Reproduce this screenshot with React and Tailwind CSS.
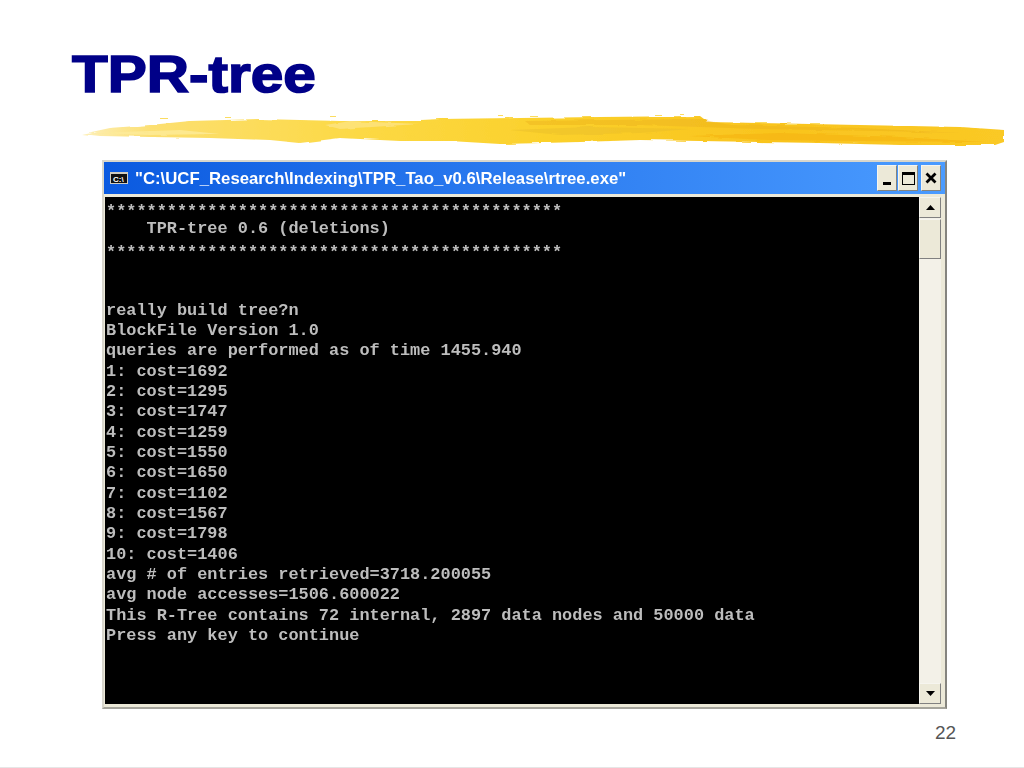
const lines = [
  '*********************************************',
  '    TPR-tree 0.6 (deletions)',
  '*********************************************',
  '',
  '',
  'really build tree?n',
  'BlockFile Version 1.0',
  'queries are performed as of time 1455.940',
  '1: cost=1692',
  '2: cost=1295',
  '3: cost=1747',
  '4: cost=1259',
  '5: cost=1550',
  '6: cost=1650',
  '7: cost=1102',
  '8: cost=1567',
  '9: cost=1798',
  '10: cost=1406',
  'avg # of entries retrieved=3718.200055',
  'avg node accesses=1506.600022',
  'This R-Tree contains 72 internal, 2897 data nodes and 50000 data',
  'Press any key to continue',
];

// page coordinates, so the shapes read straight off the screenshot
const Brush = () => (
  <svg width="944" height="44" viewBox="70 108 944 44" className="block">
    <defs>
      <linearGradient id="stroke" gradientUnits="userSpaceOnUse" x1="80" x2="1004" y1="0" y2="0">
        <stop offset="0" stopColor="#fdf0bb" />
        <stop offset="0.08" stopColor="#fcdf70" />
        <stop offset="0.3" stopColor="#fcd945" />
        <stop offset="0.5" stopColor="#fbd12c" />
        <stop offset="0.75" stopColor="#f9c41e" />
        <stop offset="1" stopColor="#fac925" />
      </linearGradient>
      <filter id="rough" x="-2%" y="-30%" width="104%" height="160%">
        <feTurbulence type="fractalNoise" baseFrequency="0.04 0.22" numOctaves="2" seed="4" />
        <feDisplacementMap in="SourceGraphic" scale="3" xChannelSelector="R" yChannelSelector="G" />
        <feGaussianBlur stdDeviation="0.4" />
      </filter>
    </defs>
    <g filter="url(#rough)">
      <path
        fill="url(#stroke)"
        d="M82 134 L110 128 L150 125 L190 121 L260 119 L340 121 L400 121 L440 119 L520 118 L600 117 L700 116 L708 122 L760 123 L860 125 L960 127 L1004 130 L1004 142 L995 145 L900 145 L820 143 L760 142 L700 141 L640 140 L580 142 L500 144 L450 141 L400 141 L340 138 L300 143 L270 140 L210 138 L150 137 L100 136 Z"
      />
      <path fill="#eab21c" opacity="0.45" d="M525 121 L700 119 L730 125 L860 128 L960 133 L880 131 L760 129 L640 125 L530 125 Z" />
      <path fill="#f5b30e" opacity="0.6" d="M690 136 L780 133 L900 137 L985 142 L860 141 L770 140 Z" />
      <path fill="#e2b62a" opacity="0.35" d="M510 130 L590 127 L690 129 L640 133 L560 135 Z" />
      <path fill="#fdeb9a" opacity="0.8" d="M90 133 L180 130 L220 134 L150 135 Z" />
      <path fill="#fde68a" opacity="0.7" d="M325 125 L350 121 L420 124 L340 129 Z" />
    </g>
    <path fill="#fbdc60" d="M498 115 h5 v1 h-5 Z M530 116 h8 v1 h-8 Z M655 115 h7 v1 h-7 Z M680 114 h4 v1 h-4 Z M755 122 h12 v1 h-12 Z M785 124 h12 v1 h-12 Z M810 123 h10 v1 h-10 Z M160 118 h8 v1 h-8 Z M225 117 h6 v1 h-6 Z M330 116 h6 v1 h-6 Z" />
  </svg>
);

const CaptionButton = ({ children, className = '' }) => (
  <div
    className={`w-[20px] h-[26px] flex items-center justify-center bg-[#ece9d8] border border-t-[#f6f5ef] border-l-[#f6f5ef] border-b-[#85847e] border-r-[#85847e] ${className}`}
  >
    {children}
  </div>
);

const ScrollButton = ({ down }) => (
  <div className="h-[21px] w-[22px] flex items-center justify-center bg-[#ece9d8] border border-t-[#f6f5ef] border-l-[#f6f5ef] border-b-[#808080] border-r-[#808080] shrink-0">
    <svg width="9" height="5" viewBox="0 0 9 5">
      <path d={down ? 'M0 0 H9 L4.5 5 Z' : 'M0 5 H9 L4.5 0 Z'} fill="#000" />
    </svg>
  </div>
);

export default function App() {
  return (
    <div className="w-[1024px] h-[768px] bg-white flex flex-col overflow-hidden relative">
      <h1 className="ml-[72px] mt-[43px] h-[62px] text-[52px] leading-[62px] font-bold text-[#000088] [font-family:'Liberation_Sans',sans-serif] [-webkit-text-stroke:1.6px_#000088] scale-x-[1.125] origin-left">
        TPR-tree
      </h1>
      <div className="ml-[70px] mt-[3px] h-[44px]">
        <Brush />
      </div>

      <div className="ml-[102px] mt-[8px] w-[845px] h-[549px] bg-[#ece9d8] border-2 border-t-[#d8d6cc] border-l-[#d8d6cc] border-r-[#85847e] border-b-[#a5a49c] flex flex-col">
        <div className="h-[32px] shrink-0 flex items-center pl-[6px] pr-[4px] bg-gradient-to-r from-[#0a5ae0] to-[#4a9bff]">
          <svg width="18" height="12" viewBox="0 0 18 12" className="shrink-0">
            <rect width="18" height="12" fill="#cfccc0" />
            <rect x="1" y="2" width="16" height="9" fill="#111" />
            <text x="3" y="9.5" fontSize="8" fontWeight="700" fill="#fff" fontFamily="Liberation Sans, sans-serif">C:\</text>
          </svg>
          <span className="ml-[7px] text-[16.5px] leading-none font-bold text-white whitespace-nowrap blur-[0.3px] [font-family:'Liberation_Sans',sans-serif] scale-x-[1.015] origin-left">
            "C:\UCF_Research\Indexing\TPR_Tao_v0.6\Release\rtree.exe"
          </span>
          <div className="ml-auto flex items-center">
            <CaptionButton>
              <div className="w-[8px] h-[3px] bg-black mt-[11px]" />
            </CaptionButton>
            <CaptionButton className="ml-[1px]">
              <div className="w-[13px] h-[13px] border border-t-[3px] border-black" />
            </CaptionButton>
            <CaptionButton className="ml-[3px]">
              <svg width="12" height="12" viewBox="0 0 12 12">
                <path d="M1.5 1.5 L10.5 10.5 M10.5 1.5 L1.5 10.5" stroke="#000" strokeWidth="2.8" />
              </svg>
            </CaptionButton>
          </div>
        </div>

        <div className="flex-1 min-h-0 flex mt-[3px] ml-[1px] mr-[4px] mb-[3px]">
          <div className="w-[814px] shrink-0 bg-black pt-[2px] pl-[1px] overflow-hidden">
            {lines.map((line, i) => (
              <div
                key={i}
                className={`h-[20.33px] leading-[20.33px] text-[16.9px] font-bold text-[#bdbdbd] whitespace-pre blur-[0.3px] [font-family:'Liberation_Mono',monospace] ${line.startsWith('*') ? 'pt-[3px]' : ''}`}
              >
                {line}
              </div>
            ))}
          </div>
          <div className="flex-1 flex flex-col bg-[#f3f1e8]">
            <ScrollButton />
            <div className="h-[40px] w-[22px] mt-[1px] bg-[#ece9d8] border border-t-[#f6f5ef] border-l-[#f6f5ef] border-b-[#808080] border-r-[#808080] shrink-0" />
            <div className="flex-1" />
            <ScrollButton down />
          </div>
        </div>
      </div>

      <div className="absolute left-[935px] top-[722px] text-[19px] leading-[22px] text-[#555] [font-family:'Liberation_Sans',sans-serif]">
        22
      </div>
      <div className="absolute left-0 right-0 bottom-0 h-[1px] bg-[#e6e6e6]" />
    </div>
  );
}
